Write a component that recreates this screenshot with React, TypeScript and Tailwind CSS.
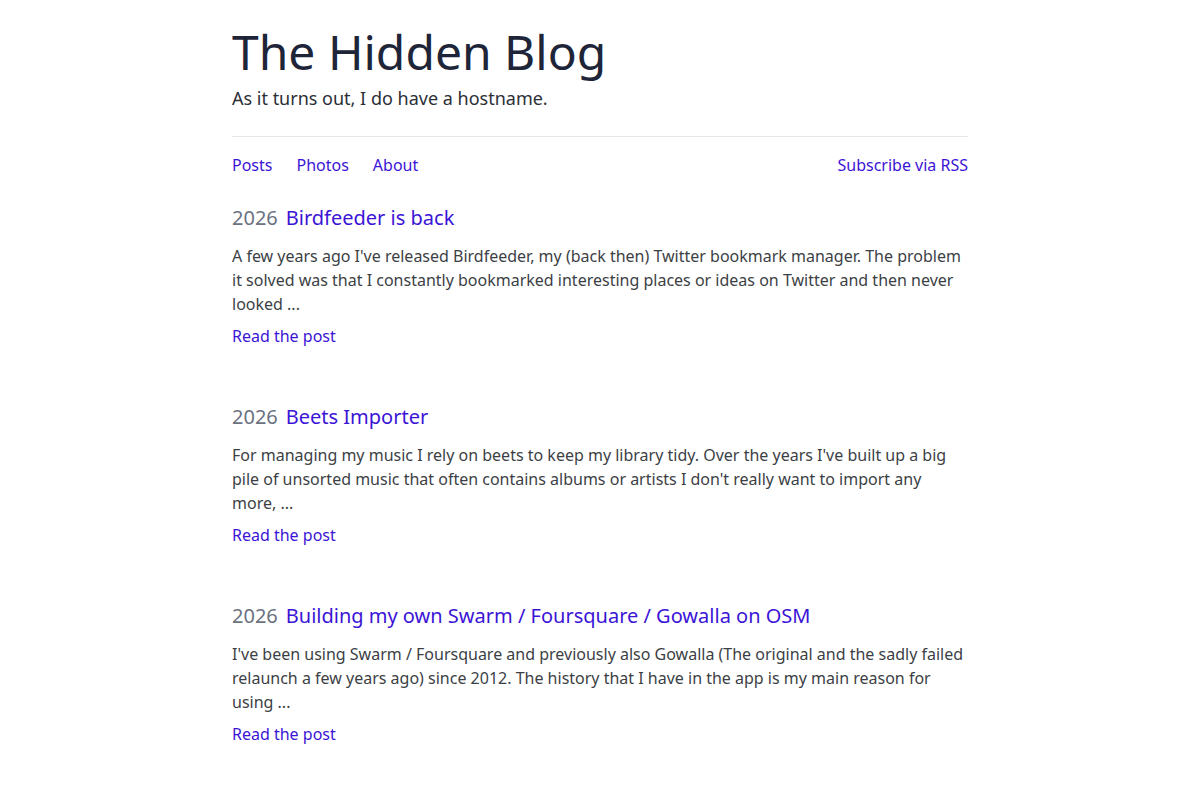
import React from "react";

const posts = [
  {
    year: "2026",
    title: "Birdfeeder is back",
    excerpt:
      "A few years ago I've released Birdfeeder, my (back then) Twitter bookmark manager. The problem it solved was that I constantly bookmarked interesting places or ideas on Twitter and then never looked ...",
  },
  {
    year: "2026",
    title: "Beets Importer",
    excerpt:
      "For managing my music I rely on beets to keep my library tidy. Over the years I've built up a big pile of unsorted music that often contains albums or artists I don't really want to import any more, ...",
  },
  {
    year: "2026",
    title: "Building my own Swarm / Foursquare / Gowalla on OSM",
    excerpt:
      "I've been using Swarm / Foursquare and previously also Gowalla (The original and the sadly failed relaunch a few years ago) since 2012. The history that I have in the app is my main reason for using ...",
  },
];

export default function App() {
  return (
    <div
      className="min-h-screen bg-white"
      style={{ fontFamily: '"Noto Sans", "Open Sans", sans-serif' }}
    >
      <div className="mx-auto w-[736px] pt-7">
        <header>
          <h1 className="text-[48px] leading-[48px] text-[#1e2538]">The Hidden Blog</h1>
          <p className="mt-2 text-[18px] leading-[28px] text-[#2b2f36]">
            As it turns out, I do have a hostname.
          </p>
        </header>
        <hr className="mt-6 border-t border-[#e5e7eb]" />
        <nav className="mt-4 flex items-center justify-between text-[16px] leading-[24px] text-[#3b14d6]">
          <div className="flex gap-6">
            <a href="#">Posts</a>
            <a href="#">Photos</a>
            <a href="#">About</a>
          </div>
          <a href="#">Subscribe via RSS</a>
        </nav>
        <main className="mt-[27px] flex flex-col gap-[55px]">
          {posts.map((p) => (
            <article key={p.title}>
              <h2 className="flex items-baseline gap-2 text-[20px] leading-[28px]">
                <span className="text-[#6b7280]">{p.year}</span>
                <a href="#" className="text-[#3b14d6]">
                  {p.title}
                </a>
              </h2>
              <p className="mt-[12px] text-[16px] leading-[24px] text-[#3c3f45]">{p.excerpt}</p>
              <a href="#" className="mt-2 block text-[16px] leading-[24px] text-[#3b14d6]">
                Read the post
              </a>
            </article>
          ))}
        </main>
      </div>
    </div>
  );
}
